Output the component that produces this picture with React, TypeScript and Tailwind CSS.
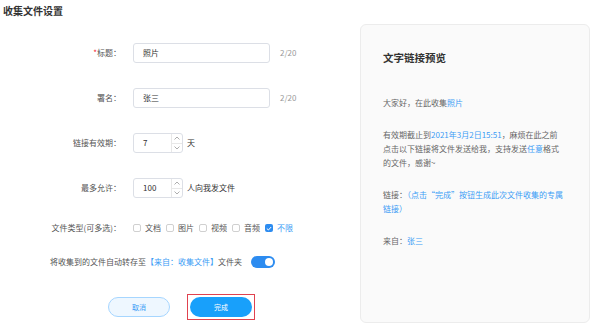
import { ReactNode } from 'react'

const font = { fontFamily: '"Noto Sans CJK SC", "Noto Sans", sans-serif' }

function Label({ children, required }: { children: ReactNode; required?: boolean }) {
  return (
    <div className="w-[121px] shrink-0 text-right text-[8px] text-[#555]">
      {required && <span className="text-[#f5222d]">*</span>}
      {children}
    </div>
  )
}

function Spinner({ value, suffix }: { value: string; suffix: string }) {
  return (
    <>
      <div className="ml-[12px] flex h-[20px] w-[50px] items-stretch rounded-[3px] border border-[#dcdfe6] bg-white">
        <div className="flex flex-1 items-center pl-[9px] text-[8px] text-[#333]">{value}</div>
        <div className="flex w-[11px] flex-col border-l border-[#e8e8e8]">
          <div className="flex flex-1 items-center justify-center border-b border-[#e8e8e8]">
            <svg width="6" height="4" viewBox="0 0 6 4" fill="none">
              <path d="M0.5 3.5 L3 1 L5.5 3.5" stroke="#999" strokeWidth="0.8" />
            </svg>
          </div>
          <div className="flex flex-1 items-center justify-center">
            <svg width="6" height="4" viewBox="0 0 6 4" fill="none">
              <path d="M0.5 0.5 L3 3 L5.5 0.5" stroke="#999" strokeWidth="0.8" />
            </svg>
          </div>
        </div>
      </div>
      <span className="ml-[4px] text-[8px] text-[#333]">{suffix}</span>
    </>
  )
}

function Check({ label, checked }: { label: string; checked?: boolean }) {
  return (
    <div className="mr-[5px] flex items-center">
      {checked ? (
        <span className="flex h-[8px] w-[8px] items-center justify-center rounded-[2px] bg-[#2d8cf0]">
          <svg width="6" height="5" viewBox="0 0 6 5" fill="none">
            <path d="M0.8 2.5 L2.4 4 L5.2 1" stroke="white" strokeWidth="1" />
          </svg>
        </span>
      ) : (
        <span className="h-[8px] w-[8px] rounded-[2px] border border-[#d0d0d0] bg-white" />
      )}
      <span className={`ml-[4px] text-[8px] ${checked ? 'text-[#3a9cf5]' : 'text-[#555]'}`}>{label}</span>
    </div>
  )
}

export default function App() {
  return (
    <div className="flex h-[326px] w-[600px] overflow-hidden bg-white" style={font}>
      {/* form side */}
      <div className="w-[360px] shrink-0">
        <div className="pl-[3px] pt-[4px] text-[10px] font-bold leading-[14px] text-[#333]">收集文件设置</div>

        <div className="mt-[25px] flex h-[20px] items-center">
          <Label required>标题：</Label>
          <div className="ml-[12px] flex h-[20px] w-[137px] items-center rounded-[3px] border border-[#dcdfe6] px-[9px] text-[8px] text-[#333]">
            照片
          </div>
          <span className="ml-[10px] text-[8px] text-[#999]">2/20</span>
        </div>

        <div className="mt-[25px] flex h-[20px] items-center">
          <Label>署名：</Label>
          <div className="ml-[12px] flex h-[20px] w-[137px] items-center rounded-[3px] border border-[#dcdfe6] px-[9px] text-[8px] text-[#333]">
            张三
          </div>
          <span className="ml-[10px] text-[8px] text-[#999]">2/20</span>
        </div>

        <div className="mt-[25px] flex h-[20px] items-center">
          <Label>链接有效期：</Label>
          <Spinner value="7" suffix="天" />
        </div>

        <div className="mt-[25px] flex h-[20px] items-center">
          <Label>最多允许：</Label>
          <Spinner value="100" suffix="人向我发文件" />
        </div>

        <div className="mt-[22px] flex h-[16px] items-center">
          <Label>文件类型(可多选)：</Label>
          <div className="ml-[12px] flex items-center">
            <Check label="文档" />
            <Check label="图片" />
            <Check label="视频" />
            <Check label="音频" />
            <Check label="不限" checked />
          </div>
        </div>

        <div className="mt-[19px] flex h-[14px] items-center pl-[50px] text-[8px] text-[#555]">
          <span>
            将收集到的文件自动转存至<span className="text-[#3a9cf5]">【来自：收集文件】</span>文件夹
          </span>
          <div className="ml-[9px] flex h-[12px] w-[24px] items-center justify-end rounded-full bg-[#2d8cf0] pr-[2px]">
            <span className="h-[8px] w-[8px] rounded-full bg-white" />
          </div>
        </div>

        <div className="mt-[25px] flex items-center pl-[108px]">
          <button className="flex h-[20px] w-[62px] items-center justify-center rounded-full border border-[#a6d6ff] bg-[#eef7ff] text-[7px] text-[#3a9cf5]">
            取消
          </button>
          <div className="ml-[17px] border border-[#e0424f] p-[2px]">
            <button className="flex h-[20px] w-[62px] items-center justify-center rounded-full bg-[#18a0fb] text-[7px] text-white">
              完成
            </button>
          </div>
        </div>
      </div>

      {/* preview panel */}
      <div className="mt-[24px] h-[299px] w-[230px] rounded-[6px] border border-[#ececec] bg-[#fafafa] pl-[22px] pr-[10px] pt-[25px] text-[8px] leading-[14px] text-[#666]">
        <div className="text-[10.5px] font-bold leading-[16px] text-[#333]">文字链接预览</div>
        <p className="mt-[30px]">
          大家好，在此收集<span className="text-[#3a9cf5]">照片</span>
        </p>
        <p className="mt-[18px] whitespace-nowrap">
          有效期截止到<span className="text-[#3a9cf5]">2021年3月2日15:51</span>，麻烦在此之前
          <br />
          点击以下链接将文件发送给我，支持发送<span className="text-[#3a9cf5]">任意</span>格式
          <br />
          的文件，感谢~
        </p>
        <p className="mt-[18px] whitespace-nowrap">
          链接：<span className="text-[#3a9cf5]">（点击“完成”按钮生成此次文件收集的专属</span>
          <br />
          <span className="text-[#3a9cf5]">链接）</span>
        </p>
        <p className="mt-[18px]">
          来自：<span className="text-[#3a9cf5]">张三</span>
        </p>
      </div>
    </div>
  )
}
